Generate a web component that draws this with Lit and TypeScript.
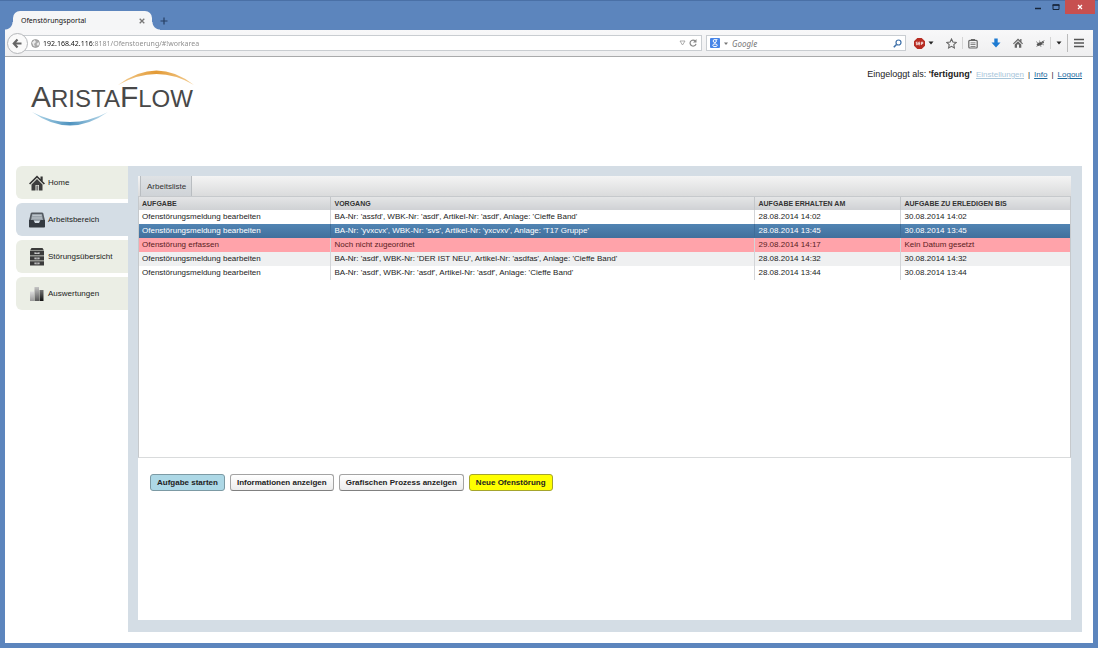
import { LitElement, html, css, svg } from "lit";
import { customElement, state } from "lit/decorators.js";
import { classMap } from "lit/directives/class-map.js";

interface Task {
  name: string;
  process: string;
  received: string;
  due: string;
  kind: string;
}

const TASKS: Task[] = [
  { name: "Ofenstörungsmeldung bearbeiten", process: "BA-Nr: 'assfd', WBK-Nr: 'asdf', Artikel-Nr: 'asdf', Anlage: 'Cieffe Band'", received: "28.08.2014 14:02", due: "30.08.2014 14:02", kind: "" },
  { name: "Ofenstörungsmeldung bearbeiten", process: "BA-Nr: 'yvxcvx', WBK-Nr: 'svs', Artikel-Nr: 'yxcvxv', Anlage: 'T17 Gruppe'", received: "28.08.2014 13:45", due: "30.08.2014 13:45", kind: "selected" },
  { name: "Ofenstörung erfassen", process: "Noch nicht zugeordnet", received: "29.08.2014 14:17", due: "Kein Datum gesetzt", kind: "alert" },
  { name: "Ofenstörungsmeldung bearbeiten", process: "BA-Nr: 'asdf', WBK-Nr: 'DER IST NEU', Artikel-Nr: 'asdfas', Anlage: 'Cieffe Band'", received: "28.08.2014 14:32", due: "30.08.2014 14:32", kind: "odd" },
  { name: "Ofenstörungsmeldung bearbeiten", process: "BA-Nr: 'asdf', WBK-Nr: 'asdf', Artikel-Nr: 'asdf', Anlage: 'Cieffe Band'", received: "28.08.2014 13:44", due: "30.08.2014 13:44", kind: "" },
];

const icon = (w: number, h: number, body: unknown) =>
  html`<svg width=${w} height=${h} viewBox="0 0 ${w} ${h}" aria-hidden="true">${body}</svg>`;

const caret = icon(6, 4, svg`<path d="M0.5 0.5h5L3 3.5z" fill="#222"/>`);

const navIcons = {
  home: icon(16, 16, svg`<path d="M8 .5 0 8.500l1.200 1L8 2.800l6.800 6.700 1.200-1L13.700 6.200V1.500H11.500V4z" fill="#333"/><path d="M2.500 9.500 8 4l5.500 5.500V15.500H10V10H6.500v5.500h-4z" fill="#3d3d3d"/><path d="M7.300 10.500h2v5h-2z" fill="#777"/>`),
  tray: icon(16, 16, svg`<path d="M3 .5h10q1 0 1.300 1L16 8.500H0L1.700 1.500q.3-1 1.300-1z" fill="#555b62"/><path d="M3.200 2h9.600l1.500 7H1.700z" fill="#9aa3ab"/><path d="M3.500 3.500h9M3 6h10" stroke="#c5ccd2" stroke-width=".8"/><path d="M0 8h4.500l1.500 3h4l1.500-3H16v6.700q0 .8-.8.8H.8q-.8 0-.8-.8z" fill="#343a41"/>`),
  drawers: icon(14, 18, svg`<path d="M1.500 0h11L14 2.500H0zM0 3h14v4.500H0zM0 8.200h14v4.300H0zM0 13.200h14v4.300H0z" fill="#3b3b3b"/><path d="M4.500 4.300h5v1.700h-5zM4.500 9.500h5v1.700h-5zM4.500 14.500h5v1.700h-5z" fill="#ddd"/><path d="M5.500 4.300h3v1h-3zM5.500 9.500h3v1h-3zM5.500 14.500h3v1h-3z" fill="#555"/>`),
  chart: icon(14, 16, svg`<defs><linearGradient id="a" x2="0" y2="1"><stop stop-color="#ddd"/><stop offset="1" stop-color="#999"/></linearGradient><linearGradient id="b" x2="0" y2="1"><stop stop-color="#c4c4c4"/><stop offset="1" stop-color="#555"/></linearGradient><linearGradient id="c" x2="0" y2="1"><stop stop-color="#777"/><stop offset="1" stop-color="#111"/></linearGradient></defs><path d="M0 5.500h4V15H0z" fill="url(#a)"/><path d="M4.500 1h4.500v14H4.500z" fill="url(#b)"/><path d="M9.500 4h4v11h-4z" fill="url(#c)"/>`),
};

@customElement("browser-chrome")
export class BrowserChrome extends LitElement {
  static styles = css`
    :host { display: block; flex: none; font-family: "Noto Sans", "Open Sans", sans-serif; font-size: 7px; }
    button { display: grid; place-items: center; border: 0; padding: 0; margin: 0; background: none; font: inherit; color: inherit; }
    svg { display: block; }
    .title { display: flex; align-items: flex-end; height: 30px; padding: 0 0 0 5px; background: #5c85bd; box-shadow: inset 0 1px #4a70a6; box-sizing: border-box; }
    .tab { display: flex; align-items: center; justify-content: space-between; box-sizing: border-box; width: 139px; height: 19px; margin: 0 8px; padding: 0 7px 0 8px; background: #f5f6f7; border-radius: 7px 7px 0 0; position: relative; color: #111; }
    .tab::before, .tab::after { content: ""; position: absolute; bottom: 0; width: 8px; height: 8px; }
    .tab::before { left: -8px; background: radial-gradient(circle at 0 0, transparent 7px, #f5f6f7 8px); }
    .tab::after { right: -8px; background: radial-gradient(circle at 100% 0, transparent 7px, #f5f6f7 8px); }
    .new { height: 19px; }
    .controls { display: flex; align-self: flex-start; margin-left: auto; margin-right: 3px; }
    .controls button { width: 18px; height: 14px; }
    .controls .close { width: 30px; background: #c75050; }
    .bar { display: flex; align-items: center; height: 27px; box-sizing: border-box; margin: 0 5px; background: linear-gradient(#f8f8f9, #efeff0); border-bottom: 1px solid #a9aaab; }
    .back { width: 21px; height: 21px; flex: none; box-sizing: border-box; border: 1px solid #b5b7ba; border-radius: 50%; background: #fafafa; margin: 0 -5px 0 2px; z-index: 1; }
    .field { display: flex; align-items: center; gap: 4px; height: 16px; box-sizing: border-box; border: 1px solid #c9cdd1; background: #fff; }
    .field input { flex: 1; min-width: 0; border: 0; padding: 0; outline: 0; background: none; font: inherit; height: 14px; }
    .address { flex: 1; gap: 3px; padding: 0 4px 0 7px; }
    .address input { color: #888; background: linear-gradient(90deg, #111 50px, #888 50px); -webkit-background-clip: text; background-clip: text; -webkit-text-fill-color: transparent; }
    .search { width: 200px; margin-left: 4px; padding: 0 3px; }
    .search input { font-style: italic; font-size: 8px; }
    .search input::placeholder { color: #777; opacity: 1; }
    .tools { display: flex; align-items: center; width: 187px; height: 100%; box-sizing: border-box; padding: 0 8px; justify-content: space-between; }
    .pair { display: flex; align-items: center; gap: 3px; }
    .group { display: flex; align-items: center; gap: 5px; }
    .sep { width: 1px; height: 12px; background: #d4d4d4; }
    .tall { height: 18px; background: #bbb; }
  `;

  render() {
    return html`
      <div class="title">
        <div class="tab"><span>Ofenstörungsportal</span>
          <button aria-label="Tab schließen">${icon(6, 6, svg`<path d="M.7.7l4.600 4.600M5.300.7.7 5.300" stroke="#777" stroke-width="1.300"/>`)}</button>
        </div>
        <button class="new" aria-label="Neuer Tab">${icon(8, 8, svg`<path d="M4 .5v7M.5 4h7" stroke="#263f63" stroke-width="1.200"/>`)}</button>
        <div class="controls">
          <button aria-label="Minimieren">${icon(8, 8, svg`<path d="M1 5.500h6" stroke="#17253a" stroke-width="1.500"/>`)}</button>
          <button aria-label="Maximieren">${icon(8, 8, svg`<path d="M1 2h6v4.500H1z" fill="none" stroke="#17253a"/><path d="M.5 2h7" stroke="#17253a" stroke-width="1.500"/>`)}</button>
          <button class="close" aria-label="Schließen">${icon(6, 6, svg`<path d="M1 1l4 4M5 1 1 5" stroke="#fff" stroke-width="1.200"/>`)}</button>
        </div>
      </div>
      <div class="bar">
        <button class="back" aria-label="Zurück">${icon(11, 11, svg`<path d="M5.500 1.500 1.800 5.500l3.700 4M2 5.500h7.500" fill="none" stroke="#666" stroke-width="2.200"/>`)}</button>
        <div class="field address">
          ${icon(9, 9, svg`<circle cx="4.500" cy="4.500" r="4" fill="#aaa" stroke="#888" stroke-width=".6"/><path d="M1 3.500 3.500 1l1.500 2-2 2 1 2.500L2.500 7zM5.500 5l2-2 .8 2L7 7z" fill="#ececec"/>`)}
          <input aria-label="Adresse" value="192.168.42.116:8181/Ofenstoerung/#!workarea" />
          ${icon(7, 6, svg`<path d="M1 1h5L3.500 5z" fill="none" stroke="#999" stroke-width=".8"/>`)}
          <button aria-label="Neu laden">${icon(8, 8, svg`<path d="M6.300 2A3 3 0 1 0 7 4.800" fill="none" stroke="#888" stroke-width="1.200"/><path d="M7.500 0v3.500H4z" fill="#888"/>`)}</button>
        </div>
        <div class="field search">
          ${icon(10, 10, svg`<rect width="10" height="10" rx="1" fill="#4584e8"/><ellipse cx="4.800" cy="3" rx="1.600" ry="1.500" fill="none" stroke="#fff"/><path d="M6 1.500h1.500M5.500 4.500 4.500 5.300" stroke="#fff" stroke-width=".8"/><ellipse cx="5" cy="7.300" rx="2.200" ry="1.400" fill="none" stroke="#fff"/>`)}
          ${icon(4, 3, svg`<path d="M0 .5h4L2 3z" fill="#777"/>`)}
          <input aria-label="Suche" placeholder="Google" />
          <button aria-label="Suchen">${icon(9, 9, svg`<circle cx="5.500" cy="3.500" r="2.500" fill="none" stroke="#3d6fa8" stroke-width="1.200"/><path d="M3.500 5.500.8 8.200" stroke="#3d6fa8" stroke-width="1.600"/>`)}</button>
        </div>
        <div class="tools">
          <div class="pair">
            <button aria-label="Werbeblocker">${icon(11, 11, svg`<path d="M3.300 0h4.400L11 3.300v4.400L7.700 11H3.300L0 7.700V3.300z" fill="#b72c22"/><path d="M3.600 4.200H2.200v1.200h1.200v1.300H1.900M6 4.200H4.700v2.600H6M4.700 5.500H6M7.300 7V4.200h1.500v1.400H7.400" fill="none" stroke="#fff" stroke-width=".8"/>`)}</button>${caret}
          </div>
          <div class="group">
            <button aria-label="Lesezeichen">${icon(11, 11, svg`<path d="M5.500 1l1.400 3 3.300.4-2.400 2.200.6 3.300-2.900-1.600L2.600 9.900l.6-3.300L.8 4.400 4.100 4z" fill="none" stroke="#666" stroke-width="1.100"/>`)}</button>
            <span class="sep"></span>
            <button aria-label="Lesezeichenliste">${icon(10, 11, svg`<rect x=".8" y="2.300" width="8.400" height="7.700" rx="1" fill="none" stroke="#666" stroke-width="1.200"/><path d="M3 1h4v2H3zM2.500 4.500h5v.8h-5zM2.500 6.200h5V7h-5zM2.500 7.900h5v.8h-5z" fill="#666"/>`)}</button>
          </div>
          <button aria-label="Downloads">${icon(10, 10, svg`<path d="M3.300.5h3.400v4H9.500L5 9.500.5 4.500h2.800z" fill="#1e7bd2"/>`)}</button>
          <button aria-label="Startseite">${icon(10, 10, svg`<path d="M5 .5 0 5.500l.8.800L5 2.200l4.200 4.100.8-.8L8.500 4V1H7.200v1.600z" fill="#666"/><path d="M1.700 6.400 5 3.200l3.300 3.200v3.300H6V6.500H4v3.200H1.700z" fill="#666"/>`)}</button>
          <div class="group">
            <button aria-label="Firebug">${icon(10, 9, svg`<ellipse cx="4.500" cy="5" rx="3" ry="1.700" transform="rotate(-20 4.500 5)" fill="#555"/><circle cx="7.800" cy="3.200" r="1.200" fill="#666"/><path d="M3 4 1 2.500M5 3.500 4.500 1.500M3 6 1.500 8M5.500 6l.5 2M7 5l2 1M8 2.500l1.500-1.500" stroke="#777" stroke-width=".7"/>`)}</button>
            <span class="sep"></span>
            ${caret}
            <span class="sep tall"></span>
            <button aria-label="Menü">${icon(12, 10, svg`<path d="M1 1.500h10M1 5h10M1 8.500h10" stroke="#555" stroke-width="1.700"/>`)}</button>
          </div>
        </div>
      </div>
    `;
  }
}

@customElement("app-root")
export class AppRoot extends LitElement {
  static styles = css`
    :host { display: flex; flex-direction: column; min-height: 100vh; background: #5c85bd; font-family: "Liberation Sans", Arial, sans-serif; font-size: 8px; color: #222; }
    .page { flex: 1; display: flex; flex-direction: column; margin: 0 5px 5px; background: #fff; }
    .head { display: flex; justify-content: space-between; align-items: flex-start; height: 109px; padding: 0 11px 0 25px; }
    .logo { margin-top: 11px; display: block; }
    .logo text { font-family: "Liberation Sans", Arial, sans-serif; fill: #484848; }
    .user { display: flex; align-items: baseline; gap: 4px; margin-top: 11px; line-height: 12px; }
    .who { font-size: 9px; }
    a { color: #1c6a9e; }
    .off { color: #a9c6da; }
    .main { flex: 1; display: flex; padding: 0 11px 11px; }
    nav { display: flex; flex-direction: column; gap: 4px; width: 112px; flex: none; }
    .item { display: flex; align-items: center; gap: 3px; height: 33px; box-sizing: border-box; padding-left: 13px; border-radius: 6px 0 0 6px; background: #ebeee5; color: #222; text-decoration: none; }
    .item.active { background: #d4dde5; }
    .glyph { display: grid; place-items: center; width: 16px; }
    .glyph svg { display: block; }
    .panel { flex: 1; min-width: 0; display: flex; padding: 10px 11px 12px 10px; background: #d4dde5; }
    .sheet { flex: 1; min-width: 0; display: flex; flex-direction: column; background: #fff; }
    .tabs { display: flex; height: 20px; padding-left: 2px; background: linear-gradient(#f4f4f4, #dadbdc); }
    .tabs button { border: 1px solid #b9bdc1; border-width: 0 1px; padding: 0 5px 0 6px; background: linear-gradient(#dfe2e5, #cfd3d7); font: inherit; color: #333; }
    .list { height: 262px; box-sizing: border-box; border: 1px solid #c6c9cc; border-bottom-color: #d9dbdc; overflow: auto; }
    table { width: 100%; border-collapse: collapse; table-layout: fixed; line-height: 12px; }
    th, td { height: 14px; box-sizing: border-box; padding: 0 4px; text-align: left; white-space: nowrap; overflow: hidden; border-left: 1px solid #d3d5d8; }
    th:first-child, td:first-child { border-left: 0; padding-left: 3px; }
    th { font-size: 7px; color: #333; background: linear-gradient(#e4e5e6, #cfd1d4); height: 13px; border-color: #c3c6c9; }
    .task { width: 191px; }
    .received { width: 146px; }
    .due { width: 170px; }
    .odd { background: #eff0f1; }
    .alert { background: #ffa3aa; color: #5a1c22; }
    .selected { background: linear-gradient(#5184b3, #416f9c); color: #fff; }
    .selected td { border-color: #3f6d99; }
    .actions { display: flex; gap: 5px; padding: 16px 12px; }
    .actions button { height: 17px; padding: 0 6px; border: 1px solid #a3a3a3; border-bottom-color: #808080; border-radius: 3px; background: linear-gradient(#fff, #ececec); font: inherit; font-weight: bold; color: #222; }
    .actions .start { background: #add8e6; border-color: #7c9aa4; }
    .actions .create { background: #ff0; border-color: #a5a52c; }
  `;

  @state() private active = "Arbeitsbereich";

  private nav = [
    { label: "Home", glyph: navIcons.home },
    { label: "Arbeitsbereich", glyph: navIcons.tray },
    { label: "Störungsübersicht", glyph: navIcons.drawers },
    { label: "Auswertungen", glyph: navIcons.chart },
  ];

  render() {
    return html`
      <browser-chrome></browser-chrome>
      <div class="page">
        <header class="head">
          <svg class="logo" width="166" height="60" viewBox="0 0 166 60" role="img" aria-label="AristaFlow">
            <defs>
              <linearGradient id="sun"><stop stop-color="#f3cf96"/><stop offset=".5" stop-color="#e39a35"/><stop offset="1" stop-color="#f3cf96"/></linearGradient>
              <linearGradient id="sea"><stop stop-color="#b9dcec"/><stop offset=".5" stop-color="#4f93bf"/><stop offset="1" stop-color="#c4e0ee"/></linearGradient>
            </defs>
            <path d="M88 17Q127-12 164 17Q127-5 88 17z" fill="url(#sun)"/>
            <path d="M2 44Q40 71 78 44Q40 64 2 44z" fill="url(#sea)"/>
            <text x="1" y="39" font-size="30">A<tspan font-size="24">RISTA</tspan>F<tspan font-size="24">LOW</tspan></text>
          </svg>
          <div class="user">
            <span class="who">Eingeloggt als: <b>'fertigung'</b></span>
            <a class="off" href="#settings">Einstellungen</a><span>|</span>
            <a href="#info">Info</a><span>|</span>
            <a href="#logout">Logout</a>
          </div>
        </header>
        <div class="main">
          <nav>
            ${this.nav.map((n) => html`
              <a href="#workarea" class=${classMap({ item: true, active: n.label === this.active })} @click=${() => (this.active = n.label)}>
                <span class="glyph">${n.glyph}</span><span>${n.label}</span>
              </a>`)}
          </nav>
          <main class="panel">
            <div class="sheet">
              <div class="tabs"><button>Arbeitsliste</button></div>
              <div class="list">
                <table>
                  <thead>
                    <tr><th class="task">AUFGABE</th><th>VORGANG</th><th class="received">AUFGABE ERHALTEN AM</th><th class="due">AUFGABE ZU ERLEDIGEN BIS</th></tr>
                  </thead>
                  <tbody>
                    ${TASKS.map((t) => html`<tr class=${t.kind}><td>${t.name}</td><td>${t.process}</td><td>${t.received}</td><td>${t.due}</td></tr>`)}
                  </tbody>
                </table>
              </div>
              <div class="actions">
                <button class="start">Aufgabe starten</button>
                <button>Informationen anzeigen</button>
                <button>Grafischen Prozess anzeigen</button>
                <button class="create">Neue Ofenstörung</button>
              </div>
            </div>
          </main>
        </div>
      </div>
    `;
  }
}
